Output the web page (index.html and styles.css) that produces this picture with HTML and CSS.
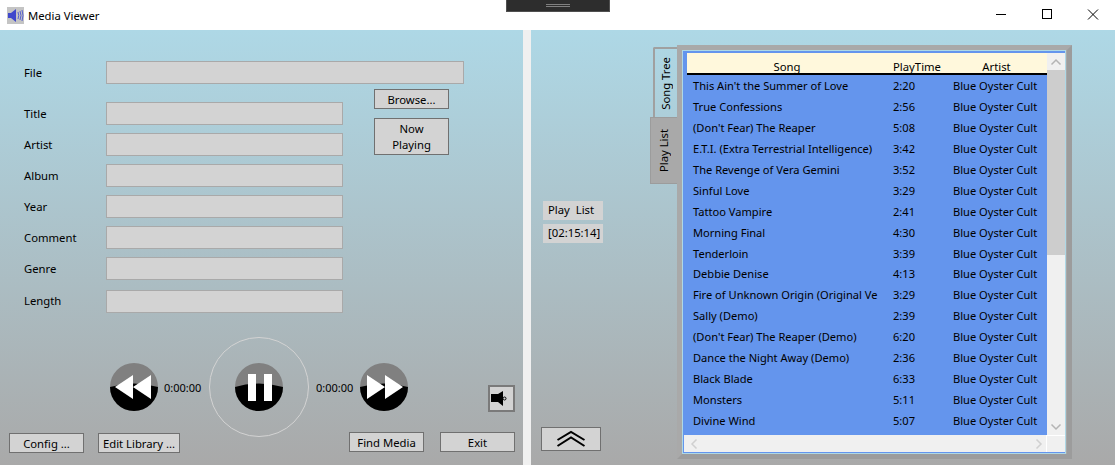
FILE: index.html
```html
<!DOCTYPE html>
<html lang="en">
<head>
    <meta charset="UTF-8">
    <title>Media Viewer</title>
    <link rel="stylesheet" href="styles.css">
</head>
<body>

    <!-- title bar -->
    <div class="titlebar">
        <svg class="appicon" width="17" height="17" viewBox="0 0 17 17">
            <rect width="17" height="17" fill="#c4c4c4"/>
            <path d="M1 6h3l5-4v13l-5-4H1z" fill="#3f48cc"/>
            <path d="M11 5q1.500 3.500 0 7M13 4q2 4.500 0 9M15 3q2 5.500 0 11" fill="none" stroke="#5560d0"/>
        </svg>
        <span class="apptitle">Media Viewer</span>
        <div class="winbtns">
            <svg width="46" height="30" viewBox="0 0 46 30"><path d="M18 14.500h10" stroke="#000"/></svg>
            <svg width="46" height="30" viewBox="0 0 46 30"><rect x="18.500" y="9.500" width="9" height="9" fill="none" stroke="#000"/></svg>
            <svg width="46" height="30" viewBox="0 0 46 30"><path d="M18 9.500l10 10M28 9.500l-10 10" stroke="#000"/></svg>
        </div>
    </div>
    <div class="grip"><i></i><i></i></div>

    <div class="main">
        <!-- left side -->
        <div class="panel leftpanel">
            <div class="filerow">
                <label>File</label>
                <div class="field wide"></div>
            </div>
            <div class="details">
                <div class="fields">
                    <div class="row"><label>Title</label><div class="field"></div></div>
                    <div class="row"><label>Artist</label><div class="field"></div></div>
                    <div class="row"><label>Album</label><div class="field"></div></div>
                    <div class="row"><label>Year</label><div class="field"></div></div>
                    <div class="row"><label>Comment</label><div class="field"></div></div>
                    <div class="row"><label>Genre</label><div class="field"></div></div>
                    <div class="row lengthrow"><label>Length</label><div class="field"></div></div>
                </div>
                <div class="sidebtns">
                    <button class="btn browse">Browse...</button>
                    <button class="btn nowplaying">Now<br>Playing</button>
                </div>
            </div>

            <div class="transport">
                <svg class="round" width="48" height="48" viewBox="0 0 48 48">
                    <circle cx="24" cy="24" r="24" fill="#808080"/>
                    <path d="M0 24q24-7 48 0a24 24 0 0 1-48 0z" fill="#000"/>
                    <path d="M5 24l18-12v24zM23 24l18-12v24z" fill="#fff"/>
                </svg>
                <span class="time">0:00:00</span>
                <div class="ring">
                    <svg class="round" width="48" height="50" viewBox="0 0 48 50">
                        <circle cx="24" cy="25" r="24" fill="#808080"/>
                        <path d="M0 25q24-7 48 0a24 24 0 0 1-48 0z" fill="#000"/>
                        <path d="M13 12h8v27h-8zM29 12h8v27h-8z" fill="#fff"/>
                    </svg>
                </div>
                <span class="time second">0:00:00</span>
                <svg class="round" width="48" height="48" viewBox="0 0 48 48">
                    <circle cx="24" cy="24" r="24" fill="#808080"/>
                    <path d="M0 24q24-7 48 0a24 24 0 0 1-48 0z" fill="#000"/>
                    <path d="M43 24l-18-12v24zM25 24l-18-12v24z" fill="#fff"/>
                </svg>
                <button class="btn volume">
                    <svg width="21" height="21" viewBox="0 0 21 21">
                        <path d="M0 6h7l5-3v15l-5-4H0z" fill="#000"/>
                        <circle cx="13.500" cy="10.500" r="1.500" fill="#d3d3d3" stroke="#000"/>
                    </svg>
                </button>
            </div>

            <div class="bottombtns">
                <button class="btn config">Config ...</button>
                <button class="btn editlib">Edit Library ...</button>
                <button class="btn findmedia">Find Media</button>
                <button class="btn exit">Exit</button>
            </div>
        </div>

        <!-- right side -->
        <div class="panel rightpanel">
            <div class="listside">
                <div class="tag">Play&nbsp; List</div>
                <div class="tag">[02:15:14]</div>
                <button class="btn upbtn">
                    <svg width="30" height="18" viewBox="0 0 30 18">
                        <path d="M1.500 10L15 2l13.500 8M1.500 16L15 7.500 28.500 16" fill="none" stroke="#000" stroke-width="2"/>
                    </svg>
                </button>
            </div>
            <div class="tabs">
                <div class="tab songtree"><span>Song Tree</span></div>
                <div class="tab playlist"><span>Play List</span></div>
            </div>
            <div class="tabbody">
                <div class="listbox">
                    <div class="listmain">
                        <div class="listrows">
                            <div class="song head"><span>Song</span><span>PlayTime</span><span>Artist</span></div>
                            <div class="song"><span>This Ain't the Summer of Love</span><span>2:20</span><span>Blue Oyster Cult</span></div>
                            <div class="song"><span>True Confessions</span><span>2:56</span><span>Blue Oyster Cult</span></div>
                            <div class="song"><span>(Don't Fear) The Reaper</span><span>5:08</span><span>Blue Oyster Cult</span></div>
                            <div class="song"><span>E.T.I. (Extra Terrestrial Intelligence)</span><span>3:42</span><span>Blue Oyster Cult</span></div>
                            <div class="song"><span>The Revenge of Vera Gemini</span><span>3:52</span><span>Blue Oyster Cult</span></div>
                            <div class="song"><span>Sinful Love</span><span>3:29</span><span>Blue Oyster Cult</span></div>
                            <div class="song"><span>Tattoo Vampire</span><span>2:41</span><span>Blue Oyster Cult</span></div>
                            <div class="song"><span>Morning Final</span><span>4:30</span><span>Blue Oyster Cult</span></div>
                            <div class="song"><span>Tenderloin</span><span>3:39</span><span>Blue Oyster Cult</span></div>
                            <div class="song"><span>Debbie Denise</span><span>4:13</span><span>Blue Oyster Cult</span></div>
                            <div class="song"><span>Fire of Unknown Origin (Original Ve</span><span>3:29</span><span>Blue Oyster Cult</span></div>
                            <div class="song"><span>Sally (Demo)</span><span>2:39</span><span>Blue Oyster Cult</span></div>
                            <div class="song"><span>(Don't Fear) The Reaper (Demo)</span><span>6:20</span><span>Blue Oyster Cult</span></div>
                            <div class="song"><span>Dance the Night Away (Demo)</span><span>2:36</span><span>Blue Oyster Cult</span></div>
                            <div class="song"><span>Black Blade</span><span>6:33</span><span>Blue Oyster Cult</span></div>
                            <div class="song"><span>Monsters</span><span>5:11</span><span>Blue Oyster Cult</span></div>
                            <div class="song"><span>Divine Wind</span><span>5:07</span><span>Blue Oyster Cult</span></div>
                        </div>
                        <div class="vscroll">
                            <div class="sbtn"><svg width="12" height="8" viewBox="0 0 12 8"><path d="M1.500 6.500L6 2l4.500 4.500" fill="none" stroke="#b4b4b4" stroke-width="1.500"/></svg></div>
                            <div class="thumb"></div>
                            <div class="sbtn low"><svg width="12" height="8" viewBox="0 0 12 8"><path d="M1.500 1.500L6 6l4.500-4.500" fill="none" stroke="#b4b4b4" stroke-width="1.500"/></svg></div>
                        </div>
                    </div>
                    <div class="hscroll">
                        <div class="htrack">
                            <svg width="8" height="12" viewBox="0 0 8 12"><path d="M6.500 1.500L2 6l4.500 4.500" fill="none" stroke="#d0d0d0" stroke-width="1.500"/></svg>
                            <svg width="8" height="12" viewBox="0 0 8 12"><path d="M1.500 1.500L6 6l-4.500 4.500" fill="none" stroke="#d0d0d0" stroke-width="1.500"/></svg>
                        </div>
                        <div class="corner"></div>
                    </div>
                </div>
            </div>
        </div>
    </div>

</body>
</html>
```

FILE: styles.css
```css
*{
    padding: 0;
    margin: 0;
    box-sizing: border-box;
}
body{
    width: 1115px;
    height: 465px;
    overflow: hidden;
    background-color: #f0f0f0;
    font-family: "Noto Sans", "Open Sans", sans-serif;
    font-size: 11.3px;
    color: #000;
    position: relative;
}
/* title bar */
.titlebar{
    height: 30px;
    background-color: #fff;
    display: flex;
    align-items: center;
    padding-left: 7px;
}
.appicon{
    margin-right: 4px;
}
.winbtns{
    margin-left: auto;
    margin-right: -1px;
    display: flex;
}
.winbtns svg{
    display: block;
}
.grip{
    position: absolute;
    left: 506px;
    top: 0;
    width: 104px;
    height: 12px;
    background-color: #2d2d2d;
    border: 1px solid #505050;
    border-top: 0;
    padding-top: 4px;
}
.grip i{
    display: block;
    width: 24px;
    height: 1px;
    margin: 0 auto 1px;
    background-color: #808080;
}
/* main area */
.main{
    height: 435px;
    display: flex;
    justify-content: space-between;
}
.panel{
    height: 435px;
    background: linear-gradient(#aed8e6, #a9a9a9);
}
.leftpanel{
    width: 523px;
    padding-top: 31px;
}
.rightpanel{
    width: 584px;
    display: flex;
    padding: 15px 0 0 10px;
}
label{
    width: 82px;
    flex: none;
}
.filerow, .row{
    display: flex;
    align-items: center;
    padding-left: 24px;
    height: 23px;
}
.filerow{
    margin-bottom: 5px;
}
.field{
    width: 237px;
    height: 23px;
    background-color: #d3d3d3;
    border: 1px solid #a9a9a9;
}
.field.wide{
    width: 358px;
}
.details{
    display: flex;
}
.fields{
    width: 374px;
    padding-top: 13px;
}
.row{
    margin-bottom: 8px;
}
.row.lengthrow{
    margin-top: 10px;
    margin-bottom: 0;
}
.lengthrow label{
    margin-bottom: 2px;
}
.btn{
    display: block;
    background-color: #d3d3d3;
    border: 1px solid #707070;
    font: inherit;
    color: #000;
}
.browse{
    width: 75px;
    height: 20px;
}
.nowplaying{
    width: 75px;
    height: 37px;
    margin-top: 9px;
    line-height: 16px;
}
/* play buttons */
.transport{
    display: flex;
    align-items: center;
    padding-left: 110px;
    margin-top: 24px;
    height: 100px;
}
.round{
    display: block;
    flex: none;
}
.time{
    width: 38px;
    margin: 0 7px 0 6px;
    font-size: 11px;
    white-space: nowrap;
}
.time.second{
    margin: 0 6px 0 7px;
}
.ring{
    width: 100px;
    height: 100px;
    border: 1.5px solid #d3d3d3;
    border-radius: 50%;
    display: flex;
    align-items: center;
    justify-content: center;
    flex: none;
}
.volume{
    width: 27px;
    height: 27px;
    margin: 23px 0 0 80px;
    border: 2px solid #7a7a7a;
    display: flex;
    align-items: center;
    justify-content: center;
    padding: 0;
    flex: none;
}
.bottombtns{
    display: flex;
    padding-left: 9px;
    margin-top: -5px;
    align-items: flex-start;
}
.config{
    width: 75px;
    height: 20px;
    margin: 1px 14px 0 0;
}
.editlib{
    width: 82px;
    height: 20px;
    margin: 1px 169px 0 0;
}
.findmedia{
    width: 75px;
    height: 20px;
    margin-right: 16px;
}
.exit{
    width: 75px;
    height: 20px;
}
/* right side */
.listside{
    width: 109px;
    flex: none;
    padding: 156px 0 0 2px;
}
.tag{
    width: 60px;
    height: 19px;
    line-height: 18px;
    background-color: #d3d3d3;
    padding-left: 5px;
    margin-bottom: 4px;
    white-space: nowrap;
}
.upbtn{
    width: 60px;
    height: 24px;
    margin: 184px 0 0 -2px;
    display: flex;
    align-items: center;
    justify-content: center;
    padding: 0;
}
.tabs{
    width: 27px;
    flex: none;
    padding-top: 2px;
}
.tab{
    display: flex;
    align-items: center;
    justify-content: center;
}
.tab span{
    writing-mode: vertical-rl;
    transform: rotate(180deg);
    white-space: nowrap;
}
.songtree{
    width: 25px;
    height: 70px;
    margin-left: 3px;
    border: solid #a0a0a0;
    border-width: 2px 0 0 2px;
    border-top-left-radius: 2px;
    padding-right: 2px;
}
.playlist{
    width: 28px;
    height: 67px;
    background-color: #a9a9a9;
    padding-right: 2px;
    border: 1px solid #9c9c9c;
    border-right: 0;
}
.tabbody{
    width: 395px;
    height: 414px;
    background-color: #a9a9a9;
    border: 5px solid #a9a9a9;
    border-right-color: #9c9c9c;
    border-bottom-color: #9c9c9c;
    flex: none;
}
.listbox{
    width: 384px;
    height: 404px;
    background-color: #6495ed;
    border: 1px solid #6495ed;
    padding: 2px 0 1px 4px;
    outline: 1px solid #aed8e6;
    outline-offset: -1px;
    display: flex;
    flex-direction: column;
}
.listmain{
    display: flex;
    height: 383px;
}
.listrows{
    width: 360px;
    overflow: hidden;
}
.song{
    display: grid;
    grid-template-columns: 200px 60px 99px;
    height: 20.95px;
    line-height: 21px;
    font-size: 11.1px;
}
.song span{
    padding-left: 6px;
    overflow: hidden;
    white-space: nowrap;
}
.song.head{
    height: 22px;
    background-color: #fff8dc;
    border-bottom: 2px solid #000;
    text-align: center;
    line-height: 27px;
    font-size: 11.3px;
}
.song.head span{
    padding-left: 0;
}
.vscroll{
    width: 18px;
    background-color: #f0f0f0;
    display: flex;
    flex-direction: column;
}
.sbtn{
    height: 17px;
    flex: none;
    display: flex;
    align-items: center;
    justify-content: center;
}
.sbtn.low{
    margin-top: auto;
}
.thumb{
    height: 185px;
    background-color: #cdcdcd;
}
.hscroll{
    display: flex;
    height: 17px;
    background-color: #f0f0f0;
    margin-left: -3px;
}
.htrack{
    flex: 1;
    display: flex;
    align-items: center;
    justify-content: space-between;
    padding: 0 3px 0 6px;
}
.corner{
    width: 19px;
    border-left: 1px solid #fff;
    border-top: 1px solid #fff;
}
```
